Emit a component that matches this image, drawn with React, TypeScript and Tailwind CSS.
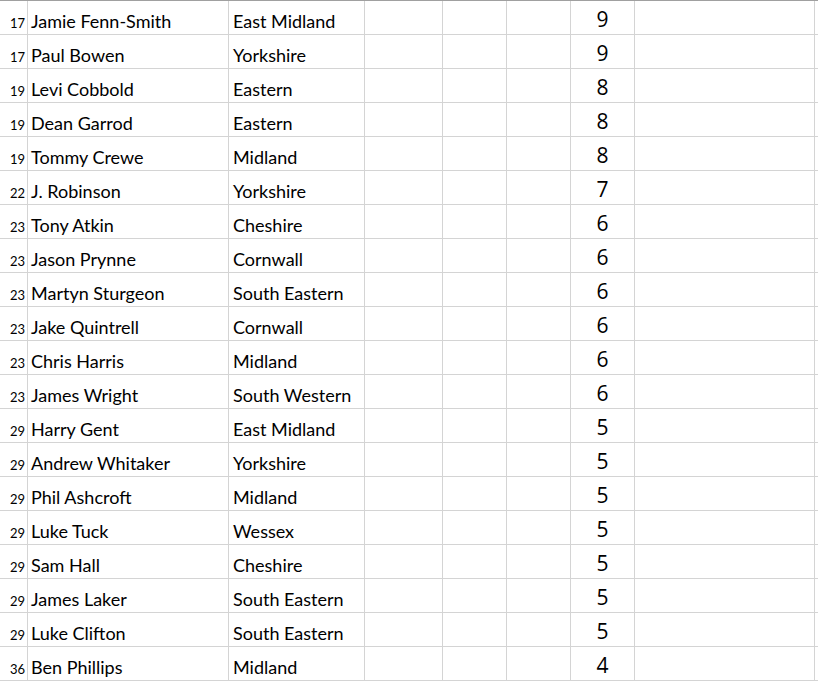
const rows: [string, string, string, string][] = [
  ['17', 'Jamie Fenn-Smith', 'East Midland', '9'],
  ['17', 'Paul Bowen', 'Yorkshire', '9'],
  ['19', 'Levi Cobbold', 'Eastern', '8'],
  ['19', 'Dean Garrod', 'Eastern', '8'],
  ['19', 'Tommy Crewe', 'Midland', '8'],
  ['22', 'J. Robinson', 'Yorkshire', '7'],
  ['23', 'Tony Atkin', 'Cheshire', '6'],
  ['23', 'Jason Prynne', 'Cornwall', '6'],
  ['23', 'Martyn Sturgeon', 'South Eastern', '6'],
  ['23', 'Jake Quintrell', 'Cornwall', '6'],
  ['23', 'Chris Harris', 'Midland', '6'],
  ['23', 'James Wright', 'South Western', '6'],
  ['29', 'Harry Gent', 'East Midland', '5'],
  ['29', 'Andrew Whitaker', 'Yorkshire', '5'],
  ['29', 'Phil Ashcroft', 'Midland', '5'],
  ['29', 'Luke Tuck', 'Wessex', '5'],
  ['29', 'Sam Hall', 'Cheshire', '5'],
  ['29', 'James Laker', 'South Eastern', '5'],
  ['29', 'Luke Clifton', 'South Eastern', '5'],
  ['36', 'Ben Phillips', 'Midland', '4'],
];

// excel-ish cell: bottom aligned text, grey gridlines
const cell = 'h-[34px] border-r border-b border-[#d4d4d4] flex items-end pb-[4px] leading-none whitespace-nowrap';

export default function App() {
  return (
    <div className="w-[818px] h-[688px] bg-white overflow-hidden border-t border-[#a0a0a0] text-black">
      {rows.map(([rank, name, region, score], i) => (
        <div key={i} className="grid grid-cols-[28px_201px_136px_78px_64px_64px_64px_180px_1fr]">
          <div className={`${cell} justify-end pr-[2px] text-[13px] font-['Lato',sans-serif]`}>{rank}</div>
          <div className={`${cell} pl-[3px] text-[18px] font-['Lato',sans-serif]`}>{name}</div>
          <div className={`${cell} pl-[4px] text-[18px] font-['Lato',sans-serif]`}>{region}</div>
          <div className={cell}></div>
          <div className={cell}></div>
          <div className={cell}></div>
          <div className={`${cell} justify-center text-[21px] font-['Open_Sans',sans-serif]`}>{score}</div>
          <div className={cell}></div>
          <div className="h-[34px] border-b border-[#d4d4d4]"></div>
        </div>
      ))}
    </div>
  );
}
